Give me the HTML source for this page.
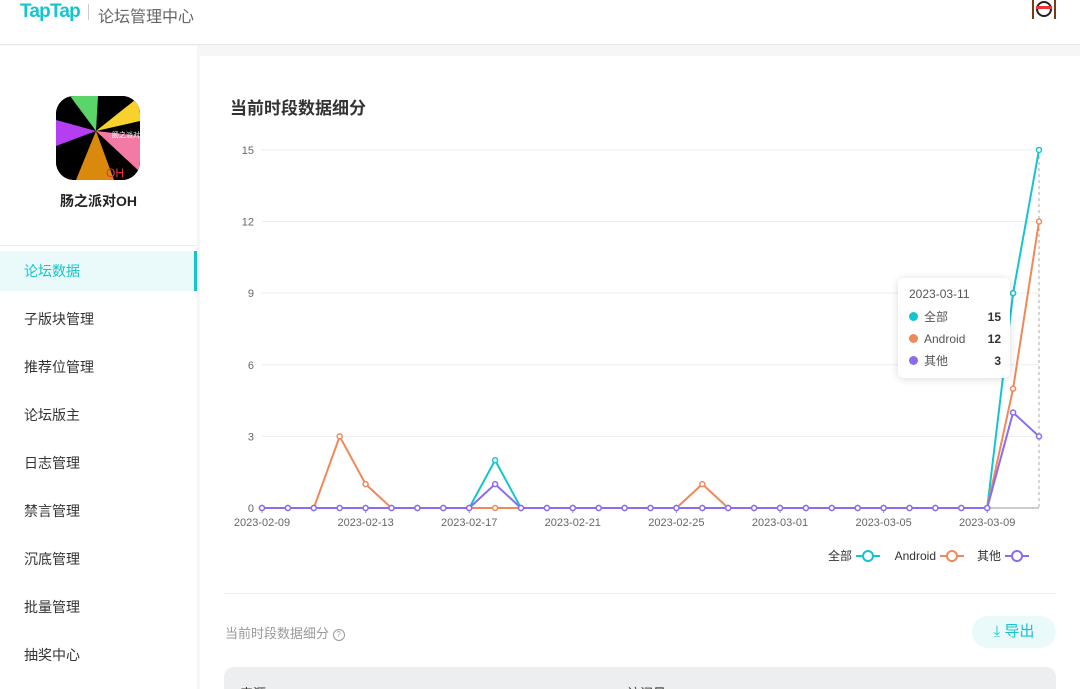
<!DOCTYPE html>
<html><head><meta charset="utf-8"><style>
*{margin:0;padding:0;box-sizing:border-box}
html,body{width:1080px;height:689px;overflow:hidden}
body{background:#f5f6f7;font-family:"Liberation Sans","Noto Sans CJK SC",sans-serif;position:relative}
.hdr{position:absolute;left:0;top:0;width:1080px;height:45px;background:#fff;border-bottom:1px solid #e8e8e8}
.logo{position:absolute;left:20px;top:1px;font-size:19px;font-weight:bold;color:#15c5ce;letter-spacing:-0.8px}
.sep{position:absolute;left:88px;top:4px;width:1px;height:16px;background:#ccc}
.ttl{position:absolute;left:98px;top:3px;font-size:16px;color:#666}
.side{position:absolute;left:0;top:46px;width:197px;height:643px;background:#fff}
.app{position:absolute;left:56px;top:50px;width:84px;height:84px;border-radius:18px;overflow:hidden;background:#000}
.name{position:absolute;left:0;width:197px;top:145px;text-align:center;font-size:14px;font-weight:bold;color:#222}
.hr{position:absolute;left:0;top:199px;width:197px;height:1px;background:#eee}
.item{position:absolute;left:0;width:197px;height:40px;line-height:40px;padding-left:24px;font-size:14px;color:#333}
.item.on{background:#eaf9fa;color:#15c5ce;border-right:3px solid #15c5ce}
.main{position:absolute;left:200px;top:56px;width:880px;height:633px;background:#fff;overflow:hidden}
.h2{position:absolute;left:30px;top:38px;font-size:17px;font-weight:bold;color:#333}
.sub{position:absolute;left:25px;top:567px;font-size:13px;color:#999}
.btn{position:absolute;left:772px;top:560px;width:84px;height:32px;border-radius:16px;background:#eaf9fa;color:#15c5ce;font-size:15px;line-height:32px;text-align:center}
.tbl{position:absolute;left:24px;top:611px;width:832px;height:40px;border-radius:10px;background:#eceeef;font-size:13px;color:#333}
.tt{position:absolute;left:11px;width:92px;height:18px;line-height:18px}
.tt b{position:absolute;right:0;top:0;color:#333}
</style></head><body>
<div class="hdr"><div class="logo">TapTap</div><div class="sep"></div><div class="ttl">论坛管理中心</div>
<svg style="position:absolute;left:1030px;top:0" width="28" height="20"><circle cx="14" cy="9" r="7" fill="none" stroke="#222" stroke-width="2"/><line x1="3" y1="0" x2="3" y2="19" stroke="#7a3a1a" stroke-width="2"/><line x1="25" y1="0" x2="25" y2="19" stroke="#7a3a1a" stroke-width="2"/><rect x="6" y="6" width="16" height="3" fill="#e33"/></svg></div>
<div class="side">
<div class="app"><svg width="84" height="84" viewBox="0 0 84 84"><rect width="84" height="84" fill="#000"/>
<polygon points="40,35 14,0 42,0" fill="#5bd46a"/><polygon points="40,35 84,0 84,25" fill="#f9d12c"/><polygon points="40,35 84,40 84,76" fill="#f27aa5"/><polygon points="40,35 20,84 58,84" fill="#d98a0c"/><polygon points="40,35 0,24 0,50" fill="#b53ff0"/>
<text x="56" y="41" font-size="7" fill="#fff" font-family="Noto Sans CJK SC">肠之派对</text><text x="50" y="81" font-size="12" fill="#e33">OH</text></svg></div>
<div class="name">肠之派对OH</div><div class="hr"></div>
<div class="item on" style="top:205px">论坛数据</div>
<div class="item" style="top:253px">子版块管理</div>
<div class="item" style="top:301px">推荐位管理</div>
<div class="item" style="top:349px">论坛版主</div>
<div class="item" style="top:397px">日志管理</div>
<div class="item" style="top:445px">禁言管理</div>
<div class="item" style="top:493px">沉底管理</div>
<div class="item" style="top:541px">批量管理</div>
<div class="item" style="top:589px">抽奖中心</div>
</div>
<div class="main">
<div class="h2">当前时段数据细分</div>
<div class="sub">当前时段数据细分 <span style="display:inline-block;width:12px;height:12px;border:1px solid #999;border-radius:50%;font-size:8px;line-height:10px;text-align:center;vertical-align:1px">?</span></div>
<div class="btn">⤓ 导出</div>
<div style="position:absolute;left:24px;top:537px;width:832px;height:1px;background:#f0f0f0"></div>
<div class="tbl"><span style="position:absolute;left:16px;top:16px">来源</span><span style="position:absolute;left:403px;top:16px">访问量</span></div>
</div>
<svg id="ch" style="position:absolute;left:0;top:0" width="1080" height="689" font-family="Liberation Sans" font-size="11" fill="#666"></svg>
<div style="position:absolute;left:898px;top:278px;width:112px;height:100px;background:#fff;border-radius:5px;box-shadow:0 1px 8px rgba(0,0,0,.15);font-size:12px;color:#555">
<div style="position:absolute;left:11px;top:9px">2023-03-11</div>
<div class="tt" style="top:30px"><span style="display:inline-block;width:9px;height:9px;border-radius:50%;background:#15c5ce;margin-right:6px"></span>全部<b>15</b></div>
<div class="tt" style="top:52px"><span style="display:inline-block;width:9px;height:9px;border-radius:50%;background:#f0885a;margin-right:6px"></span>Android<b>12</b></div>
<div class="tt" style="top:74px"><span style="display:inline-block;width:9px;height:9px;border-radius:50%;background:#8b6cf0;margin-right:6px"></span>其他<b>3</b></div>
</div>
<script>
var s='',X=i=>262+25.9*i,Y=v=>508-23.87*v;
[15,12,9,6,3,0].forEach(v=>{s+=`<line x1="262" x2="1039" y1="${Y(v)}" y2="${Y(v)}" stroke="${v?'#eceef2':'#999'}"/><text x="254" y="${Y(v)+4}" text-anchor="end">${v}</text>`});
for(var i=0;i<31;i+=4)s+=`<line x1="${X(i)}" x2="${X(i)}" y1="508" y2="513" stroke="#999"/><text x="${X(i)}" y="526" text-anchor="middle">${['2023-02-09','2023-02-13','2023-02-17','2023-02-21','2023-02-25','2023-03-01','2023-03-05','2023-03-09'][i/4]}</text>`;
s+=`<line x1="1039" x2="1039" y1="150" y2="508" stroke="#aaa" stroke-dasharray="3,3"/>`;
function ser(c,d){var a=new Array(31).fill(0);for(var k in d)a[k]=d[k];var p=a.map((v,i)=>X(i)+','+Y(v)).join(' ');s+=`<polyline points="${p}" fill="none" stroke="${c}" stroke-width="2"/>`;a.forEach((v,i)=>s+=`<circle cx="${X(i)}" cy="${Y(v)}" r="2.5" fill="#fff" stroke="${c}" stroke-width="1.5"/>`)}
ser('#15c5ce',{9:2,29:9,30:15});ser('#f0885a',{3:3,4:1,17:1,29:5,30:12});ser('#8b6cf0',{9:1,29:4,30:3});
[['全部',856,'#15c5ce'],['Android',940,'#f0885a'],['其他',1005,'#8b6cf0']].forEach(l=>{s+=`<text x="${l[1]-4}" y="560" text-anchor="end" fill="#333" font-size="12" font-family="Liberation Sans,Noto Sans CJK SC">${l[0]}</text><line x1="${l[1]}" x2="${l[1]+24}" y1="556" y2="556" stroke="${l[2]}" stroke-width="2"/><circle cx="${l[1]+12}" cy="556" r="5" fill="#fff" stroke="${l[2]}" stroke-width="2"/>`});
document.getElementById('ch').innerHTML=s;
</script>
</body></html>
